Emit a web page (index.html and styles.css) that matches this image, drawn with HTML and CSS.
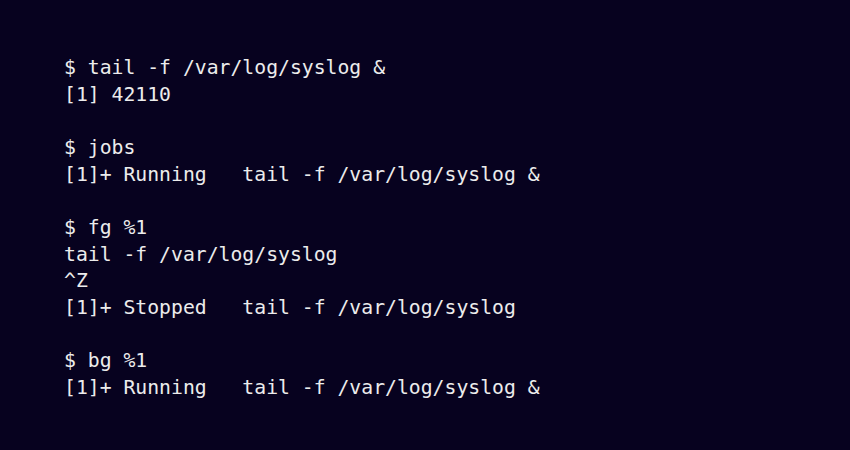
FILE: index.html
```html
<!DOCTYPE html>
<html>
<head>
<meta charset="utf-8">
<link rel="stylesheet" href="styles.css">
</head>
<body>
<pre class="term">$ tail -f /var/log/syslog &amp;
[1] 42110

$ jobs
[1]+ Running   tail -f /var/log/syslog &amp;

$ fg %1
tail -f /var/log/syslog
^Z
[1]+ Stopped   tail -f /var/log/syslog

$ bg %1
[1]+ Running   tail -f /var/log/syslog &amp;</pre>
</body>
</html>
```
FILE: styles.css
```css
html, body {
  margin: 0;
  padding: 0;
  background: #07021f;
  width: 850px;
  height: 450px;
  overflow: hidden;
}
.term {
  margin: 0;
  padding: 55px 0 0 64px;
  font-family: "DejaVu Sans Mono", monospace;
  font-size: 19.75px;
  line-height: 26.67px;
  color: #ececec;
}
```
